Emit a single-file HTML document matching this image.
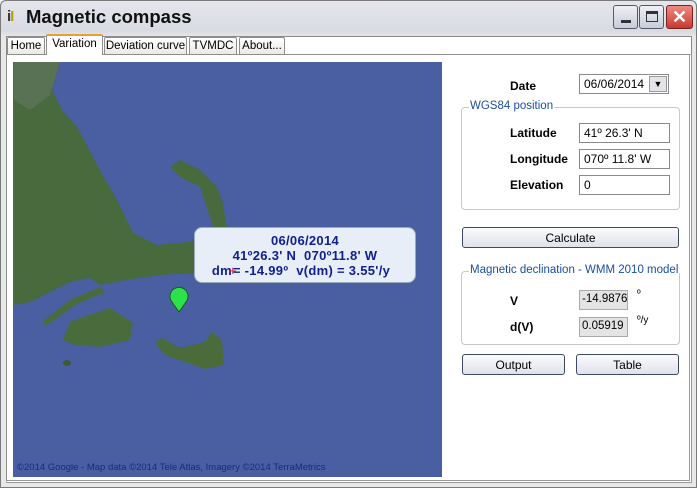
<!DOCTYPE html>
<html><head><style>
*{box-sizing:border-box;margin:0;padding:0}
body{width:697px;height:488px;overflow:hidden;background:#f0f0f0;font-family:"Liberation Sans",Tahoma,sans-serif;font-size:11px;position:relative;color:#000}
.abs{position:absolute}
.win{left:0;top:0;width:697px;height:488px;border:1px solid #7a7a7a;background:linear-gradient(#e4e6ec,#d8dbe2 30px,#e8e8e8 36px);border-radius:6px 6px 0 0}
.title{left:26px;top:6px;font-size:18.5px;font-weight:bold;color:#111}
.tb{top:5px;width:25px;height:24px;border:1px solid #555a6a;border-radius:3px;background:linear-gradient(#eef0f5,#c8ccd8)}
.client{left:6px;top:36px;width:686px;height:447px;background:#fff;border:1px solid #8a8a8a}
.tab{top:37px;height:18px;border:1px solid #8d8d8d;border-bottom:none;background:linear-gradient(#fff,#e8e8e4);padding:2px 0 0;text-align:center;font-size:11.5px;border-radius:2px 2px 0 0}
.panel{left:6px;top:54px;width:686px;height:429px;border:1px solid #8d8d8d;border-right:3px double #999;border-bottom:3px double #999;background:#fff}
.lbl{font-weight:bold;font-size:12px}
.inp{height:20px;border:1px solid #8a8a8a;background:#fff;font-size:12px;padding:2px 0 0 4px}
.grp{border:1px solid #c8c8c8;border-radius:4px}
.gt{background:#fff;color:#1a4fa0;font-size:11.5px;padding:0 1px}
.btn{height:21px;border:1px solid #3c4a66;border-radius:3px;background:linear-gradient(#fbfbfd,#dfe2ea);text-align:center;font-size:12px;padding-top:3px}
</style></head><body>
<div class="abs win"></div>
<div class="abs" style="left:7px;top:8px;font-size:15px;font-weight:bold;color:#333;letter-spacing:-1px">i<span style="color:#b8a000">I</span></div>
<div class="abs title">Magnetic compass</div>
<div class="abs tb" style="left:613px"><div class="abs" style="left:7px;top:14px;width:10px;height:3px;background:#333"></div></div>
<div class="abs tb" style="left:639px"><div class="abs" style="left:6px;top:5px;width:12px;height:11px;border:1px solid #333;border-top:3px solid #333"></div></div>
<div class="abs tb" style="left:666px;width:27px;border-color:#7a2020;background:linear-gradient(#f08a80,#c83a30);color:#fff;font-size:18px;font-weight:bold;text-align:center;line-height:22px">✕</div>
<div class="abs client"></div>
<div class="abs tab" style="left:7px;width:38px">Home</div>
<div class="abs tab" style="left:104px;width:83px">Deviation curve</div>
<div class="abs tab" style="left:189px;width:48px">TVMDC</div>
<div class="abs tab" style="left:239px;width:46px">About...</div>
<div class="abs panel"></div>
<div class="abs tab" style="left:46px;top:34px;width:57px;height:21px;background:#fff;border-top:2px solid #e8a030;z-index:2">Variation</div>
<svg class="abs" style="left:13px;top:62px" width="429" height="415" viewBox="13 62 429 415">
<rect x="13" y="62" width="429" height="415" fill="#4a5ea2"/>
<path d="M14 62 L60 62 L52 90 L62 110 L77 127 L100 170 L117 200 L133 233 L157 245 L187 242 L205 238 L213 227 L210 217 L200 187 L180 177 L170 167 L180 160 L200 170 L217 187 L222 200 L227 227 L212 236 L208 262 L193 273 L160 275 L127 280 L100 285 L90 278 L70 282 L50 292 L30 302 L14 305 Z" fill="#486a3c"/>
<path d="M100 287 L70 300 L42 322 L46 326 L75 305 L105 292Z" fill="#4a6c3c"/>
<path d="M14 62 L60 62 L50 95 L30 110 L14 100Z" fill="#6a7a6a" opacity=".5"/>
<path d="M63 340 L70 322 L83 317 L110 308 L133 323 L130 340 L100 347 L75 345Z" fill="#4a6c3c"/>
<path d="M155 343 L162 338 L180 348 L205 342 L212 332 L222 340 L224 365 L205 369 L185 362 L165 355Z" fill="#4b6c3a"/>
<ellipse cx="67" cy="363" rx="4" ry="3" fill="#3d5a38"/>
<text x="17" y="470" font-family="Liberation Sans" font-size="9.5" fill="#1a2a80">©2014 Google - Map data ©2014 Tele Atlas, Imagery ©2014 TerraMetrics</text>
<path d="M179 312 L172 302 A9 9 0 1 1 186 302 Z" fill="#2ee04a" stroke="#1a5a20" stroke-width="1"/>
</svg>
<div class="abs" style="left:194px;top:227px;width:222px;height:56px;background:#e8eef8;border:1px solid #9ab;border-radius:8px;color:#102090;font-weight:bold;font-size:13px;text-align:center;line-height:15px;padding-top:5px;letter-spacing:.3px">06/06/2014<br>41º26.3' N&nbsp; 070º11.8' W<br><span style="margin-left:-8px">dm<span style="color:#e02020;font-weight:normal;margin:0 -4px 0 -3px">+</span>= -14.99º&nbsp; v(dm) = 3.55'/y</span></div>
<div class="abs lbl" style="left:510px;top:79px">Date</div>
<div class="abs inp" style="left:579px;top:74px;width:90px">06/06/2014</div>
<div class="abs" style="left:649px;top:76px;width:18px;height:16px;border:1px solid #999;background:#e4e4e8;text-align:center;font-size:9px;line-height:15px">▼</div>
<div class="abs grp" style="left:461px;top:107px;width:219px;height:103px"></div>
<div class="abs gt" style="left:469px;top:100px">WGS84 position</div>
<div class="abs lbl" style="left:510px;top:126px">Latitude</div>
<div class="abs inp" style="left:579px;top:123px;width:91px">41º 26.3' N</div>
<div class="abs lbl" style="left:510px;top:152px">Longitude</div>
<div class="abs inp" style="left:579px;top:149px;width:91px">070º 11.8' W</div>
<div class="abs lbl" style="left:510px;top:178px">Elevation</div>
<div class="abs inp" style="left:579px;top:175px;width:91px">0</div>
<div class="abs btn" style="left:462px;top:227px;width:217px">Calculate</div>
<div class="abs grp" style="left:461px;top:271px;width:219px;height:74px"></div>
<div class="abs gt" style="left:469px;top:264px">Magnetic declination - WMM 2010 model</div>
<div class="abs lbl" style="left:510px;top:294px">V</div>
<div class="abs inp" style="left:579px;top:290px;width:49px;background:#e4e4e4;border-color:#aaa;font-size:11.5px;padding-left:2px">-14.9876</div>
<div class="abs" style="left:637px;top:289px;font-size:10px">º</div>
<div class="abs lbl" style="left:510px;top:320px">d(V)</div>
<div class="abs inp" style="left:579px;top:317px;width:49px;background:#e4e4e4;border-color:#aaa;font-size:11.5px;padding-left:2px">0.05919</div>
<div class="abs" style="left:637px;top:315px;font-size:10px">º/y</div>
<div class="abs btn" style="left:462px;top:354px;width:103px">Output</div>
<div class="abs btn" style="left:576px;top:354px;width:103px">Table</div>
</body></html>
